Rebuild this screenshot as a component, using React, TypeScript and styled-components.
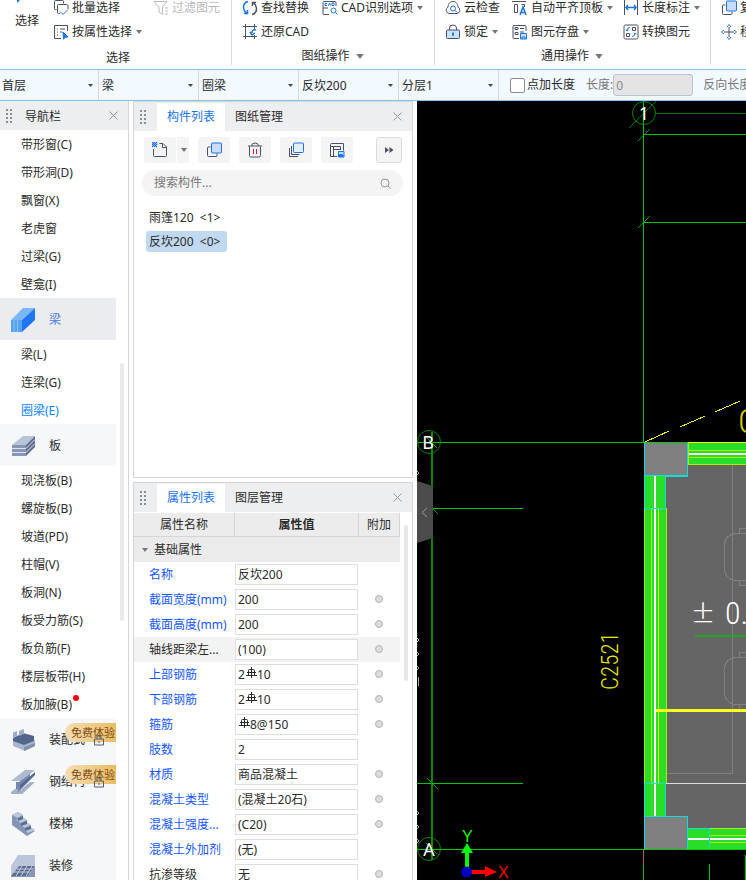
import React from "react";
import styled, { createGlobalStyle, css } from "styled-components";

const GlobalStyle = createGlobalStyle`
  *, *::before, *::after { box-sizing: border-box; }
  body {
    margin: 0;
    background: #fff;
    color: #2b2b2b;
    font: 12px/16px "Noto Sans", "Noto Sans CJK SC", sans-serif;
    overflow: hidden;
  }
  button, input, select {
    font: inherit;
    color: inherit;
    margin: 0;
    padding: 0;
    border: 0;
    background: none;
  }
  svg { display: block; flex: none; }
`;

const BLUE = "#1a73e8";
const INK = "#4a5068";

/* ---------- layout ---------- */

const Page = styled.div`
  display: flex;
  flex-direction: column;
  height: 100vh;
`;

const Ribbon = styled.header`
  display: flex;
  flex: none;
  align-items: flex-end;
  height: 69px;
  overflow: hidden;
`;

const Group = styled.section<{ $width: number }>`
  display: flex;
  flex: none;
  flex-direction: column;
  justify-content: flex-end;
  width: ${(p) => p.$width}px;
  height: 72px;
  margin-bottom: 1px;
  position: relative;
  &::after {
    content: "";
    position: absolute;
    right: 0;
    top: 0;
    bottom: 3px;
    width: 1px;
    background: #d9d9d9;
  }
`;

const Tools = styled.div<{ $columns: string; $inset?: number }>`
  display: grid;
  grid-template-columns: ${(p) => p.$columns};
  grid-auto-rows: 24px;
  padding-left: ${(p) => p.$inset ?? 10}px;
`;

const SelectTools = styled.div`
  display: flex;
  flex: none;
  align-items: flex-end;
  gap: 14px;
  padding-left: 15px;
`;

const BigButton = styled.button`
  display: flex;
  flex-direction: column;
  align-items: center;
  width: 24px;
  padding-bottom: 15px;
  gap: 10px;
`;

const ToolButton = styled.button`
  display: flex;
  align-items: center;
  gap: 3px;
  white-space: nowrap;
  &:disabled { color: #b8b8b8; }
`;

const GroupLabel = styled.div<{ $low?: boolean }>`
  display: flex;
  flex: none;
  align-items: center;
  justify-content: center;
  gap: 3px;
  height: 24px;
  padding-top: ${(p) => (p.$low ? 4 : 0)}px;
  padding-left: ${(p) => (p.$low ? 4 : 0)}px;
`;

const CaretSvg = styled.svg`
  margin-left: 1px;
  fill: #777;
`;

const FilterBar = styled.form`
  display: flex;
  flex: none;
  align-items: center;
  height: 32px;
  border-top: 1px solid #8ec1f5;
  border-bottom: 1px solid #8ec1f5;
  background: #f2f9ff;
  overflow: hidden;
  white-space: nowrap;
`;

const Picker = styled.div`
  display: grid;
  flex: none;
  align-items: center;
  width: 100px;
  height: 30px;
  border-right: 1px solid #d5d9de;
  &:first-child { width: 99px; }
  > * { grid-area: 1 / 1; }
  > svg {
    justify-self: end;
    margin-right: 5px;
    fill: #444;
    pointer-events: none;
  }
  select {
    appearance: none;
    width: 100%;
    height: 30px;
    padding-top: 2px;
    padding-left: 3px;
    outline: 0;
  }
  &:first-child select { padding-left: 2px; }
`;

const CheckLabel = styled.label`
  display: flex;
  align-items: center;
  gap: 2px;
  margin: 0 11px;
  input {
    appearance: none;
    width: 15px;
    height: 15px;
    border: 1px solid #8b8b8b;
    border-radius: 2px;
    background: #fff;
  }
  input:checked { background: ${BLUE}; }
`;

const LengthLabel = styled.label`
  display: flex;
  align-items: center;
  margin-right: 10px;
  color: #777;
  input {
    width: 80px;
    height: 22px;
    padding-left: 2px;
    border: 1px solid #b9c3d2;
    border-radius: 3px;
    background: #e4e4e4;
    color: #8a8a8a;
  }
`;

const Workspace = styled.main`
  display: flex;
  flex: 1;
  min-height: 0;
`;

const Nav = styled.nav`
  display: flex;
  flex: none;
  flex-direction: column;
  width: 129px;
  border-right: 1px solid #d5d5d5;
`;

const PanelHead = styled.div`
  display: flex;
  flex: none;
  align-items: center;
  height: 29px;
  background: #edeef0;
`;

const NavTitle = styled.h2`
  flex: 1;
  margin: 0 0 0 12px;
  padding-top: 2px;
  font: inherit;
`;

const CloseButton = styled.button`
  width: 9px;
  margin: 0 10px 0 auto;
`;

const Grip = styled.svg`
  margin-left: 6px;
  fill: #8d8d8d;
`;

const NavBody = styled.div`
  display: flex;
  flex: 1;
  min-height: 0;
  overflow: hidden;
`;

const NavList = styled.div`
  width: 116px;
`;

const NavScroll = styled.div`
  width: 4px;
  height: 258px;
  margin: 233px 0 0 4px;
  border-radius: 2px;
  background: #e9e9e9;
`;

const NavItem = styled.button<{ $active?: boolean }>`
  display: block;
  width: 100%;
  height: 28px;
  padding-top: 2px;
  padding-left: 21px;
  text-align: left;
  color: ${(p) => (p.$active ? "#0a84ff" : "inherit")};
`;

const Dotted = styled.span`
  position: relative;
  &::after {
    content: "";
    position: absolute;
    right: -7px;
    top: -1px;
    width: 6px;
    height: 6px;
    border-radius: 50%;
    background: #f00;
  }
`;

const Category = styled.button<{ $active?: boolean }>`
  display: flex;
  align-items: center;
  gap: 13px;
  position: relative;
  width: 100%;
  height: 42px;
  padding-top: 2px;
  padding-left: 11px;
  white-space: nowrap;
  background: ${(p) => (p.$active ? "#ebecf0" : "#f5f7f9")};
  color: ${(p) => (p.$active ? "#4a7be0" : "inherit")};
  > svg:last-of-type:not(:first-child) {
    position: absolute;
    right: 12px;
    top: 16px;
  }
`;

const Trial = styled.span`
  position: absolute;
  right: 0;
  top: 5px;
  padding: 2px 1px 1px 6px;
  border-radius: 10px 0 0 10px;
  background: linear-gradient(90deg, #f5dcb4, #e9bd62);
  color: #7a4a14;
  font-size: 11px;
`;

const Side = styled.div`
  display: flex;
  flex: none;
  flex-direction: column;
  gap: 4px;
  width: 280px;
  margin: 0 4px;
  overflow: hidden;
`;

const Panel = styled.section<{ $grow?: boolean }>`
  display: flex;
  flex-direction: column;
  border: 1px solid #d5d5d5;
  ${(p) =>
    p.$grow
      ? css`
          flex: 1;
          min-height: 0;
          border-bottom: 0;
          overflow: hidden;
        `
      : css`
          flex: none;
          height: 377px;
        `}
`;

const Tabs = styled.div`
  display: flex;
  height: 28px;
  margin-left: 10px;
`;

const Tab = styled.button<{ $active?: boolean }>`
  padding: 0 10px;
  background: ${(p) => (p.$active ? "#fff" : "transparent")};
  color: ${(p) => (p.$active ? BLUE : "inherit")};
`;

const Toolbar = styled.div`
  display: flex;
  gap: 9px;
  padding: 6px 10px;
`;

const IconButton = styled.button<{ $framed?: boolean }>`
  display: flex;
  align-items: center;
  justify-content: center;
  width: ${(p) => (p.$framed ? 26 : 32)}px;
  height: 26px;
  margin-left: ${(p) => (p.$framed ? "auto" : 0)};
  border: ${(p) => (p.$framed ? "1px solid #dcdcdc" : 0)};
  border-radius: 3px;
  background: #f4f4f4;
`;

const Split = styled.div`
  display: flex;
  gap: 1px;
`;

const SplitArrow = styled.button`
  display: flex;
  align-items: center;
  justify-content: center;
  width: 12px;
  height: 26px;
  background: #f4f4f4;
`;

const Search = styled.label`
  display: flex;
  align-items: center;
  height: 26px;
  margin: 1px 9px 11px 8px;
  padding: 0 12px;
  border-radius: 13px;
  background: #f4f4f4;
  input {
    flex: 1;
    min-width: 0;
    outline: 0;
  }
  input::placeholder { color: #777; opacity: 1; }
`;

const Components = styled.div`
  display: flex;
  flex-direction: column;
  align-items: flex-start;
  gap: 3px;
  padding-left: 12px;
`;

const ComponentItem = styled.button<{ $active?: boolean }>`
  min-width: 81px;
  height: 21px;
  padding: 0 4px 0 3px;
  border-radius: 3px;
  text-align: left;
  white-space: nowrap;
  background: ${(p) => (p.$active ? "#c0d8f0" : "transparent")};
`;

const TableArea = styled.div`
  display: flex;
  align-items: flex-start;
  margin-top: 1px;
`;

const Table = styled.table`
  width: 266px;
  border-collapse: separate;
  border-spacing: 0;
  table-layout: fixed;
  th, td { padding: 0; font-weight: 400; }
  thead th {
    height: 24px;
    border-right: 1px solid #d5d5d5;
    border-bottom: 1px solid #d5d5d5;
    background: #ececec;
  }
  thead th:nth-child(2) { font-weight: 600; }
`;

const Section = styled.th`
  height: 25px;
  background: #ebebeb;
  text-align: left;
  button {
    display: flex;
    align-items: center;
    gap: 6px;
    padding-left: 7px;
  }
`;

const PropRow = styled.tr<{ $plain?: boolean; $shaded?: boolean }>`
  height: 25px;
  background: ${(p) => (p.$shaded ? "#f3f3f3" : "#fff")};
  th {
    padding-left: 15px;
    text-align: left;
    white-space: nowrap;
    color: ${(p) => (p.$plain ? "#2b2b2b" : "#1557ff")};
  }
  td:last-child { padding: 0 2px 2px 0; }
`;

const Value = styled.div`
  display: flex;
  align-items: center;
  width: 123px;
  height: 21px;
  padding-left: 2px;
  border: 1px solid #dedede;
  background: #fff;
  input {
    flex: 1;
    min-width: 0;
    outline: 0;
  }
`;

const RebarSvg = styled.svg`
  margin: 0 0 4px 1px;
`;

const Attach = styled.input`
  && {
    appearance: none;
    display: block;
    width: 8px;
    height: 8px;
    margin: 0 auto;
    border: 1px solid #b4b4b4;
    border-radius: 50%;
    background: #dcdcdf;
  }
`;

const TableScroll = styled.div`
  width: 4px;
  height: 156px;
  margin: 12px 0 0 4px;
  border-radius: 2px;
  background: #e6e6e6;
`;

const Canvas = styled.div`
  position: relative;
  flex: 1;
  min-width: 0;
  background: #000;
  overflow: hidden;
`;

const Collapse = styled.button`
  position: absolute;
  left: 0;
  top: 380px;
`;

/* ---------- icons ---------- */

const Caret = ({ big }: { big?: boolean }) => (
  <CaretSvg width={big ? 12 : 6} height={big ? 5 : 4} viewBox="0 0 6 4">
    <path d="M0 0h6L3 4z" />
  </CaretSvg>
);

const art: Record<string, React.ReactNode> = {
  batch: (
    <>
      <path d="M3.500 9.500h-1q-1 0-1-1v-7q0-1 1-1h7q1 0 1 1v2M7 13.500H5.500q-1 0-1-1v-7q0-1 1-1h8q1.500 0 1.500 1.500V9" />
      <path d="m7 11.500 3 3 5-5" stroke={BLUE} />
    </>
  ),
  props: (
    <>
      <path d="M8 14.500H1.500v-13h13V7M4 5h1m2 0h5M4 8h1m2 0h2M4 11h1" />
      <path d="m10 8 5 5-2.500.2-2 2z" fill={BLUE} stroke={BLUE} />
    </>
  ),
  filter: <path d="M1 1.500h13L9.500 7v7.500L6 12V7zM12 8h3m-3 3h3m-3 3h3" stroke="#bbb" />,
  find: (
    <>
      <path d="M6 1.500Q1.500 2.500 1.500 7.500q0 3 3 5.500M2 13.500h3.500V10" stroke={BLUE} strokeWidth="1.500" />
      <path d="M10 14.500q4.500-1 4.500-6 0-3-3-6M14 2.500h-3.500V6" strokeWidth="1.500" />
    </>
  ),
  cadOptions: (
    <>
      <path d="M7 14.500H2q-1 0-1-1v-11q0-1 1-1h11q1 0 1 1V6M1 8h5" />
      <path d="M5 3.500H3v2h2m1.500 0L7.500 3l1 2.500M10 3v2.500h2V3z" stroke={BLUE} />
      <circle cx="11.500" cy="10.500" r="2.500" stroke={BLUE} />
      <path d="m13.500 12.500 2 2" stroke={BLUE} />
    </>
  ),
  restore: (
    <>
      <path d="M1 2.500h14M3.500 0v15M1 12.500h14M12.500 0v5m0 6v4" />
      <path d="M14 6q-4-1-4 3M8 8l2 3 3-2" stroke={BLUE} strokeWidth="1.500" />
    </>
  ),
  cloud: (
    <>
      <path d="M4 13.500a3.500 3.500 0 0 1-1-6.500C3.500 3 5.500 1.500 8 1.500s4.500 1.500 5 5.500a3.500 3.500 0 0 1-1 6.500z" />
      <circle cx="8" cy="8.500" r="2.500" stroke={BLUE} />
      <path d="m10 10.500 2 2" stroke={BLUE} />
    </>
  ),
  lock: (
    <>
      <path d="M4.500 6V4q0-3 3.500-3t3.500 3v2" />
      <rect x="1.500" y="6" width="13" height="8.500" rx="1" fill="#c9e2fb" />
      <path d="M8 8.500v3.500M7 9.500h2" stroke={BLUE} strokeWidth="1.500" />
    </>
  ),
  align: (
    <>
      <path d="M0 1.500h14M2.500 4.500h3v8h-3zM9.500 4.500h3V7" />
      <path d="m8 15 3-8 3 8M9 12.500h4" stroke={BLUE} strokeWidth="1.500" />
    </>
  ),
  save: (
    <>
      <path d="M7 14.500H2q-1 0-1-1v-11q0-1 1-1h11q1 0 1 1V7M8 4.500h4M8 8h4M3 3.500h3v2H3zM3 8.500h3v2H3z" />
      <path d="M8.500 9.500h6v5.500h-6z" fill="#c9e2fb" stroke={BLUE} />
      <path d="M10 15v-2h3v2" stroke={BLUE} />
    </>
  ),
  measure: (
    <>
      <path d="M1.500 0v15M14.500 0v15" />
      <path d="M3 7.500h10M5 5 3 7.500 5 10M11 5l2 2.500-2 2.500" stroke={BLUE} strokeWidth="1.500" />
    </>
  ),
  convert: (
    <>
      <rect x="1" y="1" width="14" height="14" rx="1.500" />
      <path d="M9.500 3.500h3v3h-3zM3.500 9.500h3v3h-3z" />
      <path d="M7 3.500Q4 3.500 4 6.500M3 5.500l1 1.500 1.500-1M9 12.500q3 0 3-3M11 10l1-1 1.500 1" stroke={BLUE} />
    </>
  ),
  copy: (
    <>
      <path d="M4.500 5h-2q-1 0-1 1v7.500q0 1 1 1H10q1 0 1-1v-2" />
      <rect x="5.500" y="1" width="10" height="10" rx="1" fill="#c9dcfa" stroke={BLUE} />
    </>
  ),
  layers: (
    <>
      <path d="M1.500 6v8.500H10M3.500 4v8.500h8" />
      <rect x="5.500" y="1" width="10" height="9.500" rx="1" fill="#e3edfc" stroke={BLUE} />
    </>
  ),
  move: (
    <>
      <path d="M8 3v10M3 8h10" />
      <path d="M6 3l2-2.500L10 3M6 13l2 2.500 2-2.500M3 6 .500 8 3 10M13 6l2.500 2-2.500 2" stroke={BLUE} />
    </>
  ),
  create: (
    <>
      <path d="M1.500 7v6.500q0 1 1 1h11q1 0 1-1V5L11 1.500H7.500M10.500 2v3.500H14" />
      <path
        d="M0 0h1v1H0zM2 0h1v1H2zM4 0h1v1H4zM1 1h1v1H1zM3 1h1v1H3zM0 2h1v1H0zM2 2h1v1H2zM4 2h1v1H4zM1 3h1v1H1zM3 3h1v1H3zM0 4h1v1H0zM2 4h1v1H2zM4 4h1v1H4z"
        fill={BLUE}
        stroke={BLUE}
        strokeWidth=".4"
      />
    </>
  ),
  trash: (
    <>
      <path d="M1 4h14M4.500 4q0-3 3.500-3t3.500 3M2.500 4.500v9q0 1.500 1.500 1.500h8q1.500 0 1.500-1.500v-9" />
      <path d="M6.500 7v5M9.500 7v5" stroke="#e02020" />
    </>
  ),
  store: (
    <>
      <path d="M8 14.500H1.500v-12q0-1 1-1h12v7M4.500 4v10.500M4.500 7.500h7M1.500 4.500h10V8" />
      <path d="M9.500 9.500h5.500v5.500H9.500z" fill="#c9e2fb" stroke={BLUE} />
      <path d="m9.500 13 2.500-1.500 2.500 1.500v2h-5z" fill={BLUE} stroke="none" />
    </>
  ),
  more: <path d="M4 5v6l4-3zM8.500 5v6l4-3z" fill={INK} stroke="none" />,
};

const Icon = ({ name }: { name: string }) => (
  <svg width="16" height="16" viewBox="0 0 16 16" fill="none" stroke={INK} aria-hidden>
    {art[name]}
  </svg>
);

const Dots = () => (
  <Grip width="7" height="14" viewBox="0 0 7 14">
    {[0, 4, 8, 12].map((y) => (
      <React.Fragment key={y}>
        <rect x="0" y={y} width="2" height="2" />
        <rect x="4" y={y} width="2" height="2" />
      </React.Fragment>
    ))}
  </Grip>
);

const Close = () => (
  <CloseButton type="button" aria-label="关闭">
    <svg width="9" height="9" viewBox="0 0 9 9" stroke="#999">
      <path d="m.5.500 8 8m0-8-8 8" />
    </svg>
  </CloseButton>
);

const categoryArt: Record<string, React.ReactNode> = {
  beam: (
    <>
      <path d="M0 12 12 0h12L11 12z" fill="#7db6f5" />
      <path d="M0 12h11v12H0z" fill="#55a2f3" />
      <path d="M11 12 24 0v12L11 24z" fill="#2075f0" />
      <path d="M3 12v12M6.500 12v12" stroke="#8cc0fa" />
    </>
  ),
  slab: (
    <>
      <path d="M1 11 12 2h12l-9 9z" fill="#b9c3d8" />
      <path d="M1 11h14v11H1z" fill="#8796b6" />
      <path d="m15 11 9-9v11l-9 9z" fill="#5d6d91" />
      <path d="M1 14.500h14l9-9M1 18.500h14l9-9" stroke="#dfe5ef" fill="none" />
    </>
  ),
  precast: (
    <>
      <path d="m2 12 10 4 12-4v6l-10 5-12-5z" fill="#a9b6d0" />
      <path d="m2 10 10-5 11 3v5l-10 4-11-4z" fill="#53658c" />
      <path d="M2 4.500 6 3v5L2 9.500zM8 3l5-2v5L8 8z" fill="#9dabc8" />
      <path d="m13 19 11-4v3l-11 5z" fill="#8191b2" />
    </>
  ),
  steel: (
    <>
      <path d="M0 11 14 0h10L11 11z" fill="#aebad1" />
      <path d="M5 12h3l11-8v3L9 16v6H5z" fill="#7586aa" />
      <path d="M0 22 4 19h3v3l12-10h5L11 24H0z" fill="#a3b0ca" />
      <path d="M9 15 24 2v3L9 20z" fill="#556790" />
    </>
  ),
  stairs: (
    <>
      <path d="m1 3 6-3 5 3v4l4 1v4l4 1v4l4 2-8 5L1 13z" fill="#8595b6" />
      <path d="m1 3 6-3 5 3-5 3zM5 8l7-3 4 3-6 3zM10 13l6-3 4 3-6 3zM14 18l6-3 4 3-7 3z" fill="#bcc6da" />
      <path d="M7 6v3l5-2V4zM10 11v3l6-2V9zM14 16v3l6-2v-3z" fill="#5b6d93" />
    </>
  ),
  decor: (
    <>
      <path d="M7 1h17v11H8L0 22V12z" fill="#bcc6da" />
      <path d="M8 12h16l-7 10H0z" fill="#5a6b90" />
      <path d="M6 15h16M3 18h16M11 12l-6 10M16 12l-6 10M21 12l-6 10" stroke="#c5cee0" />
      <path d="M0 22h24v1H0zM17 22l7-10v11z" fill="#8796b6" />
    </>
  ),
};

const CategoryIcon = ({ name }: { name: string }) => (
  <svg width="25" height="24" viewBox="0 0 25 24">
    {categoryArt[name]}
  </svg>
);

const LockBadge = () => (
  <svg width="10" height="12" viewBox="0 0 10 12" fill="none" stroke="#555c70">
    <path d="M3 5V2h4v3M.5 5h9v6h-9zM5 7v2" />
  </svg>
);

const Rebar = () => (
  <RebarSvg width="11" height="11" viewBox="0 0 11 11" fill="none" stroke="#2b2b2b">
    <path d="M5.500 0v11M2.500 8V3.500q0-1 1-1h4q1 0 1 1V8M1 5.500h9M0 8.500h11" />
  </RebarSvg>
);

/* ---------- parts ---------- */

type ToolProps = { icon: string; label: string; menu?: boolean; disabled?: boolean };
const Tool = ({ icon, label, menu, disabled }: ToolProps) => (
  <ToolButton type="button" disabled={disabled}>
    <Icon name={icon} />
    {label}
    {menu && <Caret />}
  </ToolButton>
);

type Entry =
  | { kind: "item"; text: string; active?: boolean; dot?: boolean }
  | { kind: "category"; text: string; icon: string; active?: boolean; trial?: boolean };

const item = (text: string): Entry => ({ kind: "item", text });

const entries: Entry[] = [
  ...["带形窗(C)", "带形洞(D)", "飘窗(X)", "老虎窗", "过梁(G)", "壁龛(I)"].map(item),
  { kind: "category", text: "梁", icon: "beam", active: true },
  item("梁(L)"),
  item("连梁(G)"),
  { kind: "item", text: "圈梁(E)", active: true },
  { kind: "category", text: "板", icon: "slab" },
  ...["现浇板(B)", "螺旋板(B)", "坡道(PD)", "柱帽(V)", "板洞(N)", "板受力筋(S)", "板负筋(F)", "楼层板带(H)"].map(item),
  { kind: "item", text: "板加腋(B)", dot: true },
  { kind: "category", text: "装配式", icon: "precast", trial: true },
  { kind: "category", text: "钢结构", icon: "steel", trial: true },
  { kind: "category", text: "楼梯", icon: "stairs" },
  { kind: "category", text: "装修", icon: "decor" },
];

type Prop = {
  name: string;
  value: string;
  lead?: string;
  rebar?: boolean;
  attach?: boolean;
  plain?: boolean;
  shaded?: boolean;
};

const props: Prop[] = [
  { name: "名称", value: "反坎200" },
  { name: "截面宽度(mm)", value: "200", attach: true },
  { name: "截面高度(mm)", value: "200", attach: true },
  { name: "轴线距梁左...", value: "(100)", attach: true, plain: true, shaded: true },
  { name: "上部钢筋", lead: "2", rebar: true, value: "10", attach: true },
  { name: "下部钢筋", lead: "2", rebar: true, value: "10", attach: true },
  { name: "箍筋", rebar: true, value: "8@150", attach: true },
  { name: "肢数", value: "2" },
  { name: "材质", value: "商品混凝土", attach: true },
  { name: "混凝土类型", value: "(混凝土20石)", attach: true },
  { name: "混凝土强度...", value: "(C20)", attach: true },
  { name: "混凝土外加剂", value: "(无)" },
  { name: "抗渗等级", value: "无", attach: true, plain: true },
];

const Drawing = () => (
  <svg width="100%" height="100%" fill="none" shapeRendering="crispEdges">
    <g transform="translate(-417 -101)">
      {/* room and columns */}
      <path d="M666 465h1400v364H666z" fill="#656565" />
      <path d="M732.500 465v308H666M746 528.500h-7v5M746 533.500h-11q-11 2-11 14v18q0 13 11 15h11M739 580v5h7M746 652.500h-7v5M746 657.500h-11q-11 2-11 14v18q0 13 11 15h11M739 704v5h7" stroke="#808080" />
      <path d="M666 783.500h1400" stroke="#ddd" />
      <path d="M695 635.500h1400" stroke="#20a820" strokeWidth="2" />

      {/* walls */}
      <path d="M644 476h22v341h-22zM688 443h1400v22H688zM688 828h1400v21H688z" fill="#29de29" />
      <path d="M655 476v341M688 453.500h1400M688 838.500h1400" stroke="#fff" strokeWidth="2" />
      <path d="M644.500 508v275M651.500 508v275M666.500 508v275M688 450.500h1400M688 457.500h1400M688.500 443v22M688 464.500h1400M710 828.500h1400M710 835.500h1400M710 842.500h1400" stroke="#b4e800" />
      <path d="M658.500 508v275M688 442.500h1400" stroke="#f0f000" />
      <path d="M656 710.500h1400" stroke="#ffff20" strokeWidth="3" />
      <path d="M644 443h44v33h-44zM644 817h44v33h-44z" fill="#808080" />
      <path d="M644.500 443v65h21v-32h22v-33M643.500 475.500h44M644 508.500h22M666 783.500h-21.500v66M665.500 783v33M644 816.500h43.500v33M687.500 828.500h22v21" stroke="#10dcdc" />

      {/* axes */}
      <path d="M643.500 101v341M417 442.500h271M433 508.500h90M417 783.500h106M417 849.500h1400M644 134.500h1400M644 222.500h1400M643.500 864v20M709.500 864v20M745.500 855v30" stroke="#00c800" />
      <path d="M432 432v428" stroke="#008a00" strokeWidth="2" />
      <path d="M655 113.500h1400" stroke="#007000" />
      <path d="M643.500 850v14" stroke="#a06058" />
      <g stroke="#00a000" shapeRendering="auto">
        <path d="m638 141 12-12M638 228l12-12M427 503l11 11M427 778l11 11M426 437l11 11M426 843l11 11" />
        <path d="m629 128 27-27" stroke="#007000" />
        <g stroke="#008800">
          <circle cx="644" cy="113" r="11.500" />
          <circle cx="429" cy="442" r="11.500" />
          <circle cx="429" cy="849" r="11.500" />
        </g>
      </g>
      <path d="M417 471q3 2 0 4M417 638q3 2 0 4M417 652q3 2 0 4M417 666q3 2 0 4M418 677v9M417 811q3 2 0 4M417 825q3 2 0 4M417 839q3 2 0 4" stroke="#aaa" />
      <path d="m645 442 24-11M680 427l25-11M715 412l25-11" stroke="#f0f000" />

      <g fill="#fff" fontFamily="Noto Sans, sans-serif" fontSize="18" textAnchor="middle">
        <text x="644" y="120">1</text>
        <text x="428" y="449">B</text>
        <text x="429" y="856">A</text>
      </g>
      <g fontFamily="Roboto Condensed, Lato, sans-serif" fontWeight="300">
        <text x="725" y="624" fill="#fff" fontSize="32">0.00</text>
        <text x="738" y="433" fill="#d0d000" fontSize="34">C2521</text>
        <text transform="translate(618 690) rotate(-90)" fill="#e8e800" fontSize="23">C2521</text>
      </g>
      <text x="692" y="624" fill="#fff" fontFamily="Lato, sans-serif" fontWeight="300" fontSize="38">±</text>

      {/* coordinate origin */}
      <g shapeRendering="auto">
        <path d="M465 870v-17h-4l6-10 6 10h-4v17z" fill="#0f0" />
        <path d="M470 870h15v-4l12 6-12 5v-3h-15z" fill="#f00" />
        <circle cx="466.500" cy="872" r="5.500" fill="#0000c0" />
      </g>
      <g fontFamily="Liberation Sans, sans-serif" fontSize="16">
        <text x="462" y="842" fill="#0f0">Y</text>
        <text x="498" y="878" fill="#f00">X</text>
      </g>
    </g>
  </svg>
);

export default function App() {
  return (
    <Page>
      <GlobalStyle />
      <Ribbon>
        <Group $width={232}>
          <SelectTools>
            <BigButton type="button">
              <svg width="24" height="20" viewBox="0 0 24 20">
                <path d="M2 0v20l4-4 6-2z" fill={BLUE} />
              </svg>
              选择
            </BigButton>
            <Tools $columns="100px auto" $inset={0}>
              <Tool icon="batch" label="批量选择" />
              <Tool icon="filter" label="过滤图元" disabled />
              <Tool icon="props" label="按属性选择" menu />
            </Tools>
          </SelectTools>
          <GroupLabel $low>选择</GroupLabel>
        </Group>
        <Group $width={203}>
          <Tools $columns="80px auto">
            <Tool icon="find" label="查找替换" />
            <Tool icon="cadOptions" label="CAD识别选项" menu />
            <Tool icon="restore" label="还原CAD" />
          </Tools>
          <GroupLabel>
            图纸操作
            <Caret big />
          </GroupLabel>
        </Group>
        <Group $width={276}>
          <Tools $columns="67px 111px auto">
            <Tool icon="cloud" label="云检查" />
            <Tool icon="align" label="自动平齐顶板" menu />
            <Tool icon="measure" label="长度标注" menu />
            <Tool icon="lock" label="锁定" menu />
            <Tool icon="save" label="图元存盘" menu />
            <Tool icon="convert" label="转换图元" />
          </Tools>
          <GroupLabel>
            通用操作
            <Caret big />
          </GroupLabel>
        </Group>
        <Group $width={200}>
          <Tools $columns="auto">
            <Tool icon="copy" label="复制" />
            <Tool icon="move" label="移动" />
          </Tools>
          <GroupLabel />
        </Group>
      </Ribbon>

      <FilterBar>
        {["首层", "梁", "圈梁", "反坎200", "分层1"].map((v) => (
          <Picker key={v}>
            <select aria-label={v} defaultValue={v}>
              <option>{v}</option>
            </select>
            <svg width="5" height="3" viewBox="0 0 5 3">
              <path d="M0 0h5L2.500 3z" />
            </svg>
          </Picker>
        ))}
        <CheckLabel>
          <input type="checkbox" />
          点加长度
        </CheckLabel>
        <LengthLabel>
          长度:
          <input defaultValue="0" disabled />
        </LengthLabel>
        <LengthLabel>
          反向长度:
          <input defaultValue="0" disabled />
        </LengthLabel>
      </FilterBar>

      <Workspace>
        <Nav>
          <PanelHead>
            <Dots />
            <NavTitle>导航栏</NavTitle>
            <Close />
          </PanelHead>
          <NavBody>
            <NavList>
              {entries.map((e) =>
                e.kind === "item" ? (
                  <NavItem key={e.text} type="button" $active={e.active}>
                    {e.dot ? <Dotted>{e.text}</Dotted> : e.text}
                  </NavItem>
                ) : (
                  <Category key={e.text} type="button" $active={e.active}>
                    <CategoryIcon name={e.icon} />
                    {e.text}
                    {e.trial && <Trial>免费体验</Trial>}
                    {e.trial && <LockBadge />}
                  </Category>
                )
              )}
            </NavList>
            <NavScroll />
          </NavBody>
        </Nav>

        <Side>
          <Panel>
            <PanelHead>
              <Dots />
              <Tabs>
                <Tab type="button" $active>构件列表</Tab>
                <Tab type="button">图纸管理</Tab>
              </Tabs>
              <Close />
            </PanelHead>
            <Toolbar>
              <Split>
                <IconButton type="button" aria-label="新建"><Icon name="create" /></IconButton>
                <SplitArrow type="button" aria-label="新建选项"><Caret /></SplitArrow>
              </Split>
              <IconButton type="button" aria-label="复制"><Icon name="copy" /></IconButton>
              <IconButton type="button" aria-label="删除"><Icon name="trash" /></IconButton>
              <IconButton type="button" aria-label="层间复制"><Icon name="layers" /></IconButton>
              <IconButton type="button" aria-label="存档"><Icon name="store" /></IconButton>
              <IconButton type="button" aria-label="更多" $framed><Icon name="more" /></IconButton>
            </Toolbar>
            <Search>
              <input type="text" placeholder="搜索构件..." aria-label="搜索构件" />
              <svg width="11" height="11" viewBox="0 0 11 11" fill="none" stroke="#999">
                <circle cx="5" cy="5" r="4" />
                <path d="m8 8 2.500 2.500" />
              </svg>
            </Search>
            <Components>
              <ComponentItem type="button">雨篷120&nbsp; &lt;1&gt;</ComponentItem>
              <ComponentItem type="button" $active>反坎200&nbsp; &lt;0&gt;</ComponentItem>
            </Components>
          </Panel>

          <Panel $grow>
            <PanelHead>
              <Dots />
              <Tabs>
                <Tab type="button" $active>属性列表</Tab>
                <Tab type="button">图层管理</Tab>
              </Tabs>
              <Close />
            </PanelHead>
            <TableArea>
              <Table>
                <colgroup>
                  <col width="101" />
                  <col width="124" />
                  <col width="41" />
                </colgroup>
                <thead>
                  <tr>
                    <th scope="col">属性名称</th>
                    <th scope="col">属性值</th>
                    <th scope="col">附加</th>
                  </tr>
                </thead>
                <tbody>
                  <tr>
                    <Section colSpan={3}>
                      <button type="button"><Caret />基础属性</button>
                    </Section>
                  </tr>
                  {props.map((p) => (
                    <PropRow key={p.name} $plain={p.plain} $shaded={p.shaded}>
                      <th scope="row">{p.name}</th>
                      <td>
                        <Value>
                          {p.lead}
                          {p.rebar && <Rebar />}
                          <input type="text" aria-label={p.name} defaultValue={p.value} />
                        </Value>
                      </td>
                      <td>{p.attach && <Attach type="checkbox" aria-label={`附加 ${p.name}`} />}</td>
                    </PropRow>
                  ))}
                </tbody>
              </Table>
              <TableScroll />
            </TableArea>
          </Panel>
        </Side>

        <Canvas>
          <Drawing />
          <Collapse type="button" aria-label="收起">
            <svg width="16" height="62" viewBox="0 0 16 62" fill="none">
              <path d="m0 0 16 5v52L0 62z" fill="#4c4c4c" />
              <path d="m10 27-5 4.500 5 4.500" stroke="#999" />
            </svg>
          </Collapse>
        </Canvas>
      </Workspace>
    </Page>
  );
}
